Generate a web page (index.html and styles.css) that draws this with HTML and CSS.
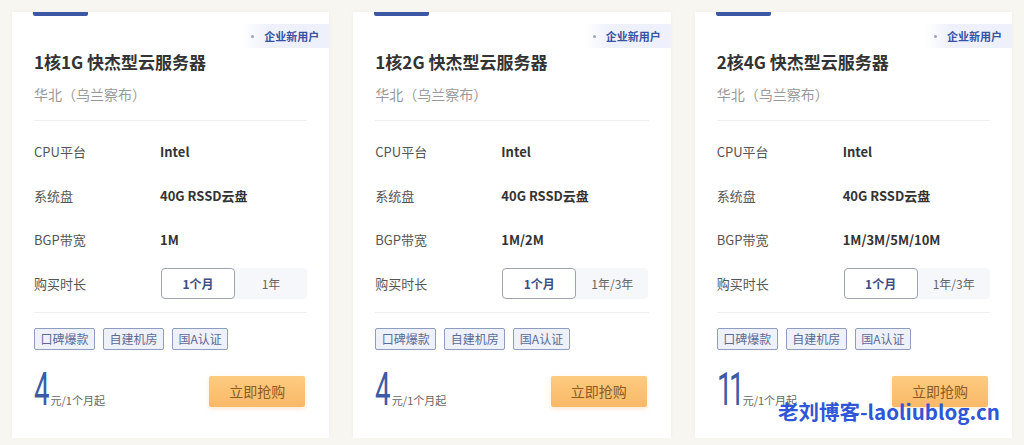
FILE: index.html
```html
<!DOCTYPE html>
<html lang="zh-CN">
<head>
    <meta charset="UTF-8">
    <meta name="viewport" content="width=device-width, initial-scale=1.0">
    <title>快杰型云服务器</title>
    <link rel="stylesheet" href="styles.css">
</head>
<body>
    <div class="plans">
        <div class="plan">
            <span class="plan-bar"></span>
            <span class="plan-badge"><i class="dot"></i>企业新用户</span>
            <div class="plan-head">
                <h2 class="plan-title">1核1G 快杰型云服务器</h2>
                <p class="plan-region">华北（乌兰察布）</p>
            </div>
            <ul class="specs">
                <li class="spec"><span class="spec-label">CPU平台</span><span class="spec-value">Intel</span></li>
                <li class="spec"><span class="spec-label">系统盘</span><span class="spec-value">40G RSSD云盘</span></li>
                <li class="spec"><span class="spec-label">BGP带宽</span><span class="spec-value">1M</span></li>
                <li class="spec">
                    <span class="spec-label">购买时长</span>
                    <div class="period">
                        <span class="period-opt active">1个月</span>
                        <span class="period-opt">1年</span>
                    </div>
                </li>
            </ul>
            <div class="tags">
                <span class="tag">口碑爆款</span>
                <span class="tag">自建机房</span>
                <span class="tag">国A认证</span>
            </div>
            <div class="buy">
                <div class="price"><span class="price-num">4</span><span class="price-unit">元/1个月起</span></div>
                <a class="buy-btn">立即抢购</a>
            </div>
        </div>

        <div class="plan">
            <span class="plan-bar"></span>
            <span class="plan-badge"><i class="dot"></i>企业新用户</span>
            <div class="plan-head">
                <h2 class="plan-title">1核2G 快杰型云服务器</h2>
                <p class="plan-region">华北（乌兰察布）</p>
            </div>
            <ul class="specs">
                <li class="spec"><span class="spec-label">CPU平台</span><span class="spec-value">Intel</span></li>
                <li class="spec"><span class="spec-label">系统盘</span><span class="spec-value">40G RSSD云盘</span></li>
                <li class="spec"><span class="spec-label">BGP带宽</span><span class="spec-value">1M/2M</span></li>
                <li class="spec">
                    <span class="spec-label">购买时长</span>
                    <div class="period">
                        <span class="period-opt active">1个月</span>
                        <span class="period-opt">1年/3年</span>
                    </div>
                </li>
            </ul>
            <div class="tags">
                <span class="tag">口碑爆款</span>
                <span class="tag">自建机房</span>
                <span class="tag">国A认证</span>
            </div>
            <div class="buy">
                <div class="price"><span class="price-num">4</span><span class="price-unit">元/1个月起</span></div>
                <a class="buy-btn">立即抢购</a>
            </div>
        </div>

        <div class="plan">
            <span class="plan-bar"></span>
            <span class="plan-badge"><i class="dot"></i>企业新用户</span>
            <div class="plan-head">
                <h2 class="plan-title">2核4G 快杰型云服务器</h2>
                <p class="plan-region">华北（乌兰察布）</p>
            </div>
            <ul class="specs">
                <li class="spec"><span class="spec-label">CPU平台</span><span class="spec-value">Intel</span></li>
                <li class="spec"><span class="spec-label">系统盘</span><span class="spec-value">40G RSSD云盘</span></li>
                <li class="spec"><span class="spec-label">BGP带宽</span><span class="spec-value">1M/3M/5M/10M</span></li>
                <li class="spec">
                    <span class="spec-label">购买时长</span>
                    <div class="period">
                        <span class="period-opt active">1个月</span>
                        <span class="period-opt">1年/3年</span>
                    </div>
                </li>
            </ul>
            <div class="tags">
                <span class="tag">口碑爆款</span>
                <span class="tag">自建机房</span>
                <span class="tag">国A认证</span>
            </div>
            <div class="buy">
                <div class="price"><span class="price-num price-num-2">11</span><span class="price-unit">元/1个月起</span></div>
                <a class="buy-btn">立即抢购</a>
            </div>
        </div>
    </div>

    <div class="watermark">老刘博客-laoliublog.cn</div>
</body>
</html>
```

FILE: styles.css
```css
body {
    margin: 0;
    background: #f8f6f1;
    font-family: "Noto Sans CJK SC", "Noto Sans", sans-serif;
    color: #333;
}
.plans {
    display: flex;
    gap: 24px;
    padding: 12px 12px 0;
}
.plan {
    position: relative;
    width: 318px;
    height: 426px;
    box-sizing: border-box;
    padding: 0 22px;
    background: #fff;
    box-shadow: 0 0 4px rgba(0,0,0,0.04);
}
.plan-bar {
    display: block;
    width: 55px;
    height: 4px;
    margin-left: -1px;
    background: #3c58a4;
    border-radius: 0 0 2px 2px;
}
.plan-badge {
    position: absolute;
    top: 12px;
    right: 0;
    height: 24px;
    line-height: 24px;
    padding: 0 10px 0 22px;
    font-size: 11px;
    font-weight: 700;
    color: #3652a3;
    background: linear-gradient(90deg, rgba(238,241,251,0), #eef1fb 30%);
}
.plan-badge .dot {
    position: absolute;
    left: 9px;
    top: 11px;
    width: 3px;
    height: 3px;
    border-radius: 50%;
    background: #9aa3bd;
}
.plan-head {
    padding: 34px 0 16px;
    border-bottom: 1px solid #eeeeee;
}
.plan-title {
    margin: 0;
    font-size: 17px;
    line-height: 24px;
    font-weight: 700;
    color: #333;
}
.plan-region {
    margin: 10px 0 0;
    font-size: 14px;
    line-height: 20px;
    color: #999;
}
.specs {
    list-style: none;
    margin: 0;
    padding: 8px 0 7px;
    border-bottom: 1px solid #eeeeee;
}
.spec {
    display: flex;
    align-items: center;
    height: 44px;
}
.spec-label {
    flex-shrink: 0;
    width: 126px;
    font-size: 13px;
    color: #555;
}
.spec-value {
    font-size: 13px;
    font-weight: 700;
    color: #333;
}
.period {
    display: flex;
    width: 146px;
    height: 31px;
    margin-left: 1px;
    background: #f5f7fb;
    border-radius: 4px;
}
.period-opt {
    flex: 1;
    display: flex;
    align-items: center;
    justify-content: center;
    font-size: 12px;
    color: #666;
}
.period-opt.active {
    flex: none;
    width: 74px;
    box-sizing: border-box;
    background: #fff;
    border: 1px solid #9ea4ae;
    border-radius: 4px;
    font-weight: 700;
    color: #3a4d86;
}
.tags {
    display: flex;
    gap: 8px;
    margin-top: 15px;
}
.tag {
    height: 22px;
    box-sizing: border-box;
    line-height: 20px;
    padding: 0 5.5px;
    border: 1px solid #8e9cc0;
    border-radius: 2px;
    background: #eef1f9;
    color: #5c6b96;
    font-size: 12px;
}
.buy {
    display: flex;
    justify-content: space-between;
    align-items: flex-end;
    margin-top: 22px;
}
.price {
    display: flex;
    align-items: baseline;
    color: #3d5aa8;
}
/* condensed digits: squeeze horizontally, give back the spare width */
.price-num {
    display: inline-block;
    font-family: Roboto, sans-serif;
    font-size: 46px;
    line-height: 34px;
    font-weight: 400;
    transform: scaleX(0.6);
    transform-origin: 0 100%;
    margin-right: -0.4ch;
}
.price-num-2 {
    letter-spacing: -6px;
    margin-right: calc(-0.8ch + 6px);
}
.price-unit {
    margin-left: 1px;
    font-size: 11px;
    color: #666;
}
.buy-btn {
    width: 96px;
    height: 31px;
    line-height: 31px;
    margin: 0 2px 1px 0;
    text-align: center;
    font-size: 14px;
    color: #8a5a24;
    background: linear-gradient(180deg, #fdcb80, #f9b967);
    border-radius: 2px;
    box-shadow: 0 2px 4px rgba(245,170,80,0.25);
}
.watermark {
    position: absolute;
    left: 778px;
    top: 398px;
    font-size: 20.5px;
    line-height: 27px;
    font-weight: 700;
    color: #2e56d6;
    white-space: nowrap;
}
```
